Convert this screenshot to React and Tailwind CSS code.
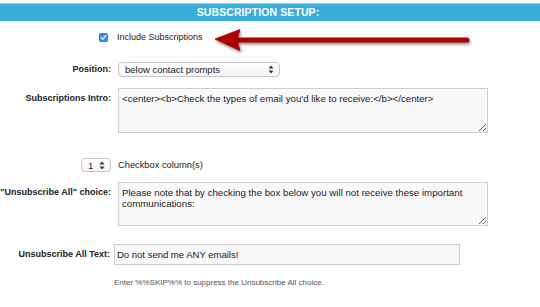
import React from "react";

function Arrows() {
  return (
    <svg width="6" height="9" viewBox="0 0 6 9" className="shrink-0">
      <path d="M3 0.5 L5.5 3.5 L0.5 3.5 Z" fill="#333" />
      <path d="M3 8.5 L5.5 5.5 L0.5 5.5 Z" fill="#333" />
    </svg>
  );
}

export default function App() {
  return (
    <div
      className="relative w-[540px] h-[307px] overflow-hidden bg-white text-[#222]"
      style={{ fontFamily: '"Liberation Sans", Arial, sans-serif' }}
    >
      <div className="h-[3px] bg-white" />
      <div className="h-[18px] bg-[#3aaddb] border-t border-[#8fd3ef] flex items-center justify-center pr-[24px]">
        <span className="text-white font-bold text-[10.5px] leading-none tracking-[0.1px]">
          SUBSCRIPTION SETUP:
        </span>
      </div>

      {/* Include Subscriptions */}
      <div className="mt-[10px] h-[12px] flex items-center pl-[99px]">
        <div className="w-[9px] h-[9px] rounded-[2px] bg-[#3d8ef3] border border-[#2f78d6] flex items-center justify-center">
          <svg width="7" height="7" viewBox="0 0 7 7">
            <path d="M1.3 3.6 L2.9 5.2 L5.8 1.6" stroke="white" strokeWidth="1.3" fill="none" strokeLinecap="round" strokeLinejoin="round" />
          </svg>
        </div>
        <span className="ml-[9px] text-[9px] leading-[11px]">Include Subscriptions</span>
      </div>

      {/* Position */}
      <div className="mt-[19px] flex items-center">
        <div className="w-[111px] text-right font-bold text-[9px] leading-[11px]">Position:</div>
        <div className="ml-[7px] w-[162px] h-[15px] rounded-[4px] border border-[#c6c6c6] bg-gradient-to-b from-white to-[#f6f6f6] flex items-center justify-between pl-[6px] pr-[5px]">
          <span className="text-[9.5px] leading-[11px]">below contact prompts</span>
          <Arrows />
        </div>
      </div>

      {/* Subscriptions Intro */}
      <div className="mt-[11px] flex items-start">
        <div className="w-[111px] text-right font-bold text-[9px] leading-[11px] pt-[5px]">Subscriptions Intro:</div>
        <textarea
          readOnly
          className="ml-[7px] w-[370px] h-[45px] border border-[#cdcdcd] bg-[#f9f9f9] text-[9.7px] leading-[11px] pt-[4px] pl-[3px] text-[#222] outline-none"
          defaultValue="<center><b>Check the types of email you'd like to receive:</b></center>"
        />
      </div>

      {/* Checkbox columns */}
      <div className="mt-[25px] flex items-center">
        <div className="w-[111px] flex justify-end">
          <div className="w-[30px] h-[14px] rounded-[4px] border border-[#c6c6c6] bg-gradient-to-b from-white to-[#f6f6f6] flex items-center justify-between pl-[6px] pr-[5px]">
            <span className="text-[9.5px] leading-[11px]">1</span>
            <Arrows />
          </div>
        </div>
        <span className="ml-[7px] text-[9.3px] leading-[11px]">Checkbox column(s)</span>
      </div>

      {/* Unsubscribe All choice */}
      <div className="mt-[10px] flex items-start">
        <div className="w-[111px] text-right font-bold text-[9px] leading-[11px] pt-[5px]">"Unsubscribe All" choice:</div>
        <textarea
          readOnly
          className="ml-[7px] w-[370px] h-[44px] border border-[#cdcdcd] bg-[#f9f9f9] text-[9.7px] leading-[11px] pt-[4px] pl-[3px] text-[#222] outline-none"
          defaultValue="Please note that by checking the box below you will not receive these important communications:"
        />
      </div>

      {/* Unsubscribe All Text */}
      <div className="mt-[18px] flex items-center">
        <div className="w-[110px] text-right font-bold text-[9px] leading-[11px]">Unsubscribe All Text:</div>
        <div className="ml-[4px] w-[346px] h-[21px] border border-[#cdcdcd] bg-[#f9f9f9] flex items-center pl-[2px]">
          <span className="text-[9.5px] leading-[11px]">Do not send me ANY emails!</span>
        </div>
      </div>

      <div className="mt-[13px] pl-[114px] text-[8px] leading-[10px] text-[#555]">
        Enter %%SKIP%% to suppress the Unsubscribe All choice.
      </div>

      {/* Annotation arrow */}
      <svg
        className="absolute left-[205px] top-[25px] drop-shadow-[1px_2px_1.5px_rgba(0,0,0,0.45)]"
        width="270"
        height="32"
        viewBox="0 0 270 32"
      >
        <line x1="32" y1="15" x2="262" y2="15" stroke="#b00000" strokeWidth="5" strokeLinecap="round" />
        <path d="M10 14 L35 4.5 L32 15 L35 25.5 Z" fill="#b00000" stroke="#9a0000" strokeWidth="0.8" strokeLinejoin="round" />
      </svg>
    </div>
  );
}
